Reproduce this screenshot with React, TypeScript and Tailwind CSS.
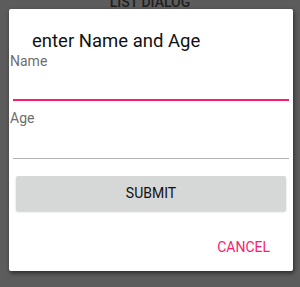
export default function App() {
   return (
      <div
         className="relative w-[300px] h-[287px] overflow-hidden bg-[#5c5c5c]"
         style={{ fontFamily: "Roboto, 'Liberation Sans', sans-serif" }}
      >
         {/* app bar behind the scrim */}
         <div className="absolute top-[-6px] left-0 w-full text-center text-[14px] leading-4 font-medium text-[#1e1e1e]">
            LIST DIALOG
         </div>

         {/* Dialog */}
         <div className="relative ml-[9px] mt-[9px] w-[284px] h-[262px] bg-white rounded-[2px] shadow-[1px_2px_4px_rgba(0,0,0,0.55)] flex flex-col">
            <h2 className="mt-[20px] ml-[23px] text-[18.5px] leading-6 text-[#111]">enter Name and Age</h2>

            <label className="ml-[1px] text-[14px] leading-4 text-[#6e6e6e]">Name</label>
            <div className="mx-[4px] h-[32px] border-b-2 border-[#ff1a6c]"></div>

            <label className="mt-[9px] ml-[1px] text-[14px] leading-4 text-[#6e6e6e]">Age</label>
            <div className="mx-[4px] h-[33px] border-b border-[#b3b3b3]"></div>

            <button className="mt-[17px] ml-[7px] mr-[7px] h-[35px] bg-[#d6d7d7] rounded-[2px] shadow-[0_1px_2px_rgba(0,0,0,0.2)] text-[14px] text-[#111]">
               SUBMIT
            </button>

            <div className="flex justify-end mt-[28px] mr-[23px]">
               <span className="text-[14px] leading-4 text-[#ff1a6c]">CANCEL</span>
            </div>
         </div>
      </div>
   );
}
